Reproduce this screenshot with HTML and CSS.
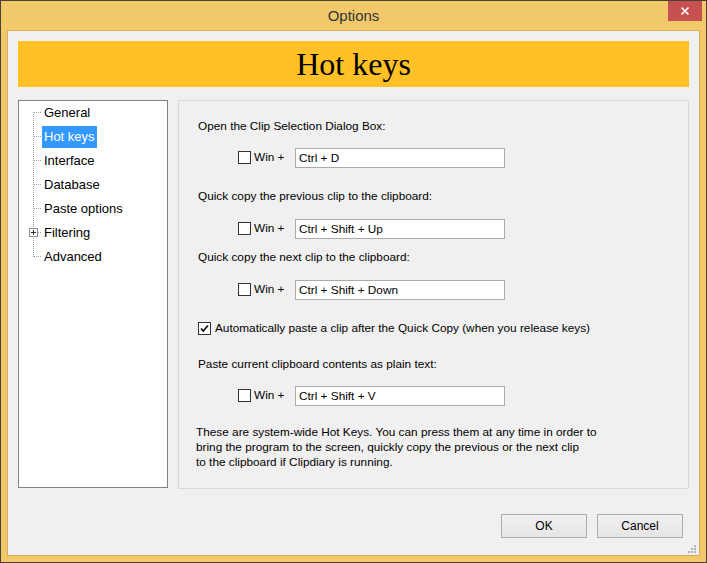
FILE: index.html
```html
<!DOCTYPE html>
<html>
<head>
<meta charset="utf-8">
<title>Options</title>
<link rel="stylesheet" href="styles.css">
</head>
<body>
<div class="window">
  <div class="titlebar">
    <span class="title">Options</span>
    <div class="close"><svg width="10" height="10" viewBox="0 0 10 10"><path d="M1.5 1.5 L8.5 8.5 M8.5 1.5 L1.5 8.5" stroke="#fff" stroke-width="1.6" fill="none"/></svg></div>
  </div>
  <div class="client">
    <div class="banner">Hot keys</div>
    <div class="main">
      <div class="tree">
        <ul class="tree-list">
          <li class="node"><span class="lbl">General</span></li>
          <li class="node"><span class="lbl sel">Hot keys</span></li>
          <li class="node"><span class="lbl">Interface</span></li>
          <li class="node"><span class="lbl">Database</span></li>
          <li class="node"><span class="lbl">Paste options</span></li>
          <li class="node"><span class="plus"><svg width="9" height="9" viewBox="0 0 9 9"><rect x="0.5" y="0.5" width="8" height="8" fill="#fff" stroke="#8e8f8f"/><path d="M2 4.5 H7 M4.5 2 V7" stroke="#333" stroke-width="1"/></svg></span><span class="lbl">Filtering</span></li>
          <li class="node"><span class="lbl">Advanced</span></li>
        </ul>
      </div>
      <div class="panel">
        <div class="label l1">Open the Clip Selection Dialog Box:</div>
        <div class="row r1"><span class="cb"></span><span class="win">Win +</span><div class="field">Ctrl + D</div></div>
        <div class="label l2">Quick copy the previous clip to the clipboard:</div>
        <div class="row r2"><span class="cb"></span><span class="win">Win +</span><div class="field">Ctrl + Shift + Up</div></div>
        <div class="label l3">Quick copy the next clip to the clipboard:</div>
        <div class="row r3"><span class="cb"></span><span class="win">Win +</span><div class="field">Ctrl + Shift + Down</div></div>
        <div class="auto"><span class="cb checked"><svg width="11" height="11" viewBox="0 0 11 11"><path d="M2 5.5 L4.3 8 L9 2.5" stroke="#111" stroke-width="1.8" fill="none"/></svg></span><span class="auto-text">Automatically paste a clip after the Quick Copy (when you release keys)</span></div>
        <div class="label l4">Paste current clipboard contents as plain text:</div>
        <div class="row r4"><span class="cb"></span><span class="win">Win +</span><div class="field">Ctrl + Shift + V</div></div>
        <p class="note">These are system-wide Hot Keys. You can press them at any time in order to<br>bring the program to the screen, quickly copy the previous or the next clip<br>to the clipboard if Clipdiary is running.</p>
      </div>
    </div>
    <div class="footer">
      <button class="btn">OK</button>
      <button class="btn">Cancel</button>
    </div>
    <div class="grip"><svg width="9" height="9" viewBox="0 0 9 9" fill="#b3b3b3"><rect x="6" y="0" width="2" height="2"/><rect x="3" y="3" width="2" height="2"/><rect x="6" y="3" width="2" height="2"/><rect x="0" y="6" width="2" height="2"/><rect x="3" y="6" width="2" height="2"/><rect x="6" y="6" width="2" height="2"/></svg></div>
  </div>
</div>
</body>
</html>
```
FILE: styles.css
```css
html, body {
  margin: 0;
  padding: 0;
  background: #f1c96b;
}
.window {
  width: 707px;
  height: 563px;
  box-sizing: border-box;
  border: 1px solid #4b4232;
  background: #f1c96b;
  display: flex;
  flex-direction: column;
  position: relative;
  font-family: "Liberation Sans", Arial, sans-serif;
}
.titlebar {
  height: 29px;
  display: flex;
  align-items: center;
  justify-content: center;
  flex: none;
}
.title {
  font-size: 15px;
  color: #333;
}
.close {
  position: absolute;
  top: 0;
  right: 4px;
  width: 34px;
  height: 20px;
  background: #c75050;
  display: flex;
  align-items: center;
  justify-content: center;
}
.client {
  flex: 1;
  margin: 0 6px 6px 6px;
  border: 1px solid #d6ae58;
  background: #f0f0f0;
  padding: 10px 10px 0 10px;
  position: relative;
  display: flex;
  flex-direction: column;
}
.banner {
  height: 46px;
  background: #ffc125;
  font-family: "Liberation Serif", "Times New Roman", serif;
  font-size: 32px;
  line-height: 46px;
  text-align: center;
  color: #000;
}
.main {
  margin-top: 13px;
  display: flex;
  gap: 10px;
  align-items: flex-start;
}
.tree {
  width: 150px;
  height: 388px;
  box-sizing: border-box;
  border: 1px solid #828282;
  background: #fff;
}
.tree-list {
  list-style: none;
  margin: 0;
  padding: 0;
  position: relative;
}
.tree-list::before {
  content: "";
  position: absolute;
  left: 14px;
  top: 11px;
  bottom: 12px;
  border-left: 1px dotted #a0a0a0;
}
.node {
  height: 24px;
  display: flex;
  align-items: center;
  padding-left: 23px;
  position: relative;
  font-size: 13px;
  color: #000;
}
.node::before {
  content: "";
  position: absolute;
  left: 15px;
  top: 11px;
  width: 7px;
  border-top: 1px dotted #a0a0a0;
}
.plus {
  position: absolute;
  left: 10px;
  top: 7px;
  width: 9px;
  height: 9px;
  z-index: 1;
  display: block;
  line-height: 0;
}
.lbl {
  padding: 0 2px;
  line-height: 22px;
  height: 22px;
}
.sel {
  background: #3399ff;
  color: #fff;
}
.panel {
  width: 511px;
  height: 389px;
  box-sizing: border-box;
  border: 1px solid #d9d9d9;
  padding-left: 19px;
  font-size: 11.8px;
  color: #000;
}
.label, .auto {
  line-height: 15px;
  height: 15px;
  white-space: nowrap;
}
.l1 { margin-top: 18px; }
.l2 { margin-top: 21px; }
.l3 { margin-top: 11px; }
.l4 { margin-top: 21px; }
.row {
  height: 20px;
  display: flex;
  align-items: center;
  padding-left: 40px;
}
.r1 { margin-top: 14px; }
.r2 { margin-top: 15px; }
.r3 { margin-top: 15px; }
.r4 { margin-top: 14px; }
.cb {
  width: 13px;
  height: 13px;
  box-sizing: border-box;
  border: 1px solid #333;
  background: #fff;
  flex: none;
  display: inline-flex;
  align-items: center;
  justify-content: center;
  margin-top: -2px;
}
.win {
  margin-left: 3px;
  width: 41px;
  margin-top: -3px;
}
.field {
  width: 210px;
  height: 20px;
  box-sizing: border-box;
  border: 1px solid #aaaaaa;
  background: #fff;
  padding-left: 3px;
  line-height: 18px;
}
.auto {
  margin-top: 21px;
  display: flex;
  align-items: center;
}
.auto .cb {
  margin-top: 0;
}
.auto-text {
  margin-left: 4px;
}
.note {
  margin: 19px 0 0 -2px;
  line-height: 15px;
  white-space: nowrap;
}
.footer {
  margin-top: 25px;
  display: flex;
  justify-content: flex-end;
  gap: 10px;
  padding-right: 6px;
}
.btn {
  width: 86px;
  height: 24px;
  border: 1px solid #acacac;
  background: linear-gradient(#f0f0f0, #e5e5e5);
  font-family: "Liberation Sans", Arial, sans-serif;
  font-size: 12px;
  color: #000;
  padding: 0;
  border-radius: 0;
}
.grip {
  position: absolute;
  right: 2px;
  bottom: 1px;
  width: 9px;
  height: 9px;
  line-height: 0;
}
```
